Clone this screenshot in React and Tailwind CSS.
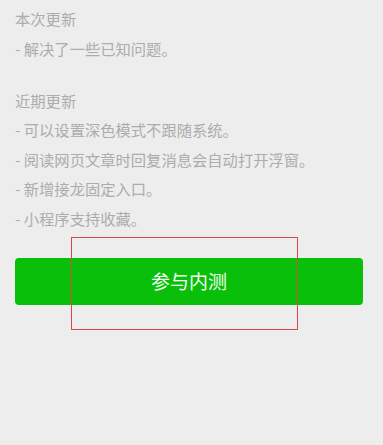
import React from 'react'

const recent = [
    '- 可以设置深色模式不跟随系统。',
    '- 阅读网页文章时回复消息会自动打开浮窗。',
    '- 新增接龙固定入口。',
    '- 小程序支持收藏。'
]

const App = () => {
    return (
        <div className="relative w-[383px] h-[445px] bg-[#ededed] overflow-hidden" style={{ fontFamily: '"Noto Sans CJK SC", "Noto Sans", sans-serif' }}>
            <div className="px-[15px] pt-[4px] text-[15.3px] text-[#acacac]">
                <div className="h-[29.5px] leading-[29.5px]">本次更新</div>
                <div className="h-[29.5px] leading-[29.5px]">- 解决了一些已知问题。</div>
                <div className="h-[22.5px]"></div>
                <div className="h-[29.5px] leading-[29.5px]">近期更新</div>
                {recent.map((line) =>
                    <div key={line} className="h-[29.5px] leading-[29.5px]">{line}</div>
                )}
            </div>
            <div className="pl-[15px] mt-[25px]">
                <button type="button" className="w-[348px] h-[47px] rounded-[4px] bg-[#09bf09] text-[#f4fff4] text-[19px]">
                    参与内测
                </button>
            </div>
            {/* annotation box over the button */}
            <div className="absolute left-[71px] top-[237px] w-[227px] h-[93px] border border-solid border-[#d44a44] pointer-events-none"></div>
        </div>
    )
}

export default App
